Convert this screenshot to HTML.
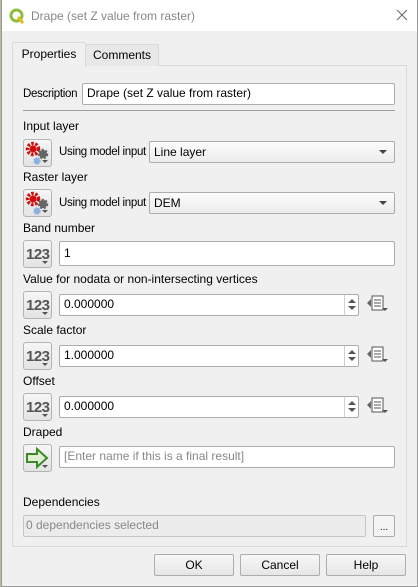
<!DOCTYPE html>
<html><head><meta charset="utf-8"><style>
*{box-sizing:border-box;margin:0;padding:0}
body{width:418px;height:587px;background:#f0f0f0;font-family:"Liberation Sans",sans-serif;font-size:12px;color:#000;position:relative;overflow:hidden}
.a{position:absolute}
.lbl{position:absolute;left:23px;line-height:14px}
.inp{position:absolute;background:#fff;border:1px solid #adadad;border-radius:2px;padding-left:4px;line-height:19px;height:22px}
.combo{position:absolute;background:linear-gradient(#fcfcfc,#ececec);border:1px solid #adadad;border-radius:2px;padding-left:4px;line-height:20px;height:22px}
.combo:after{content:"";position:absolute;right:7px;top:8px;border-left:4px solid transparent;border-right:4px solid transparent;border-top:4px solid #444}
.btn{position:absolute;left:23px;width:29px;height:28px;border:1px solid #b4b4b4;border-radius:3px;background:linear-gradient(#f6f6f6,#e3e3e3)}
.n{font-weight:bold;color:#555;font-size:15px;position:absolute;left:2px;top:5px;letter-spacing:-0.5px}
.tri{position:absolute;right:3px;bottom:3px;border-left:3px solid transparent;border-right:3px solid transparent;border-top:3px solid #555}
.spin{position:absolute;right:0;top:0;width:14px;height:20px;border-left:1px solid #d0d0d0}
.spin:before{content:"";position:absolute;left:3px;top:4px;border-left:4px solid transparent;border-right:4px solid transparent;border-bottom:4px solid #555}
.spin:after{content:"";position:absolute;left:3px;top:11px;border-left:4px solid transparent;border-right:4px solid transparent;border-top:4px solid #555}
.pb{position:absolute;height:22px;border:1px solid #adadad;border-radius:2px;background:linear-gradient(#f7f7f7,#e6e6e6);text-align:center;line-height:20px}
.umi{position:absolute;left:59px;line-height:14px;font-size:11.5px;letter-spacing:-0.3px}
</style></head><body>
<div class="a" style="left:0;top:0;width:2px;height:587px;background:#b9b9a0"></div>
<div class="a" style="left:1px;top:0;width:417px;height:587px;border:1px solid #9a9a9a;border-top:none;background:#f0f0f0"></div>
<div class="a" style="left:2px;top:0;width:415px;height:31px;background:#fff"></div>
<svg class="a" style="left:9px;top:8px" width="16" height="16" viewBox="0 0 16 16"><circle cx="7.5" cy="7.5" r="5.5" fill="none" stroke="#8cbc3c" stroke-width="3"/><path d="M9 9 L14 15" stroke="#e8b820" stroke-width="3"/></svg>
<div class="a" style="left:31px;top:9px;font-size:12px;color:#888;line-height:15px">Drape (set Z value from raster)</div>
<svg class="a" style="left:396px;top:9px" width="12" height="12"><path d="M1 1L11 11M11 1L1 11" stroke="#666" stroke-width="1"/></svg>

<div class="a" style="left:12px;top:65px;width:395px;height:482px;border:1px solid #d9d9d9;background:#f0f0f0"></div>
<div class="a" style="left:85px;top:44px;width:74px;height:22px;border:1px solid #d9d9d9;border-bottom:none;background:#e8e8e8;line-height:21px;text-align:center">Comments</div>
<div class="a" style="left:12px;top:42px;width:74px;height:25px;border:1px solid #d9d9d9;border-bottom:none;background:#f0f0f0;line-height:23px;text-align:center;border-radius:2px 2px 0 0">Properties</div>

<div class="lbl" style="top:87px;font-size:11.5px;letter-spacing:-0.3px">Description</div>
<div class="inp" style="left:82px;top:83px;width:313px">Drape (set Z value from raster)</div>
<div class="a" style="left:23px;top:110px;width:372px;height:1px;background:#a0a0a0"></div>

<div class="lbl" style="top:119px">Input layer</div>
<div class="btn" style="top:139px"><svg width="27" height="26"><circle cx="9" cy="9" r="5.5" fill="none" stroke="#d01010" stroke-width="3.5" stroke-dasharray="2.5 1.5"/><circle cx="9" cy="9" r="3.5" fill="#d01010"/><circle cx="19" cy="14" r="4" fill="#666" stroke="#666" stroke-dasharray="2 1.5" stroke-width="2.5"/><circle cx="13" cy="21" r="3" fill="#8ab0e0" stroke="#8ab0e0" stroke-width="1.5" stroke-dasharray="1.5 1"/></svg><div class="tri"></div></div>
<div class="umi" style="top:145px">Using model input</div>
<div class="combo" style="left:149px;top:141px;width:246px">Line layer</div>

<div class="lbl" style="top:170px">Raster layer</div>
<div class="btn" style="top:189px"><svg width="27" height="26"><circle cx="9" cy="9" r="5.5" fill="none" stroke="#d01010" stroke-width="3.5" stroke-dasharray="2.5 1.5"/><circle cx="9" cy="9" r="3.5" fill="#d01010"/><circle cx="19" cy="14" r="4" fill="#666" stroke="#666" stroke-dasharray="2 1.5" stroke-width="2.5"/><circle cx="13" cy="21" r="3" fill="#8ab0e0" stroke="#8ab0e0" stroke-width="1.5" stroke-dasharray="1.5 1"/></svg><div class="tri"></div></div>
<div class="umi" style="top:196px">Using model input</div>
<div class="combo" style="left:149px;top:192px;width:246px">DEM</div>

<div class="lbl" style="top:221px">Band number</div>
<div class="btn" style="top:240px"><span class="n">123</span><div class="tri"></div></div>
<div class="inp" style="left:59px;top:241px;width:336px;height:25px;line-height:23px">1</div>

<div class="lbl" style="top:272px">Value for nodata or non-intersecting vertices</div>
<div class="btn" style="top:291px"><span class="n">123</span><div class="tri"></div></div>
<div class="inp" style="left:59px;top:294px;width:300px">0.000000<div class="spin"></div></div>
<svg class="a" style="left:366px;top:294px" width="26" height="22"><path d="M1 9L5 5V13Z" fill="#666"/><rect x="6" y="2" width="11" height="14" fill="#fff" stroke="#555"/><path d="M8 6H15M8 9H15M8 12H15" stroke="#555"/><path d="M16 14H22L19 17Z" fill="#555"/></svg>

<div class="lbl" style="top:323px">Scale factor</div>
<div class="btn" style="top:342px"><span class="n">123</span><div class="tri"></div></div>
<div class="inp" style="left:59px;top:345px;width:300px">1.000000<div class="spin"></div></div>
<svg class="a" style="left:366px;top:345px" width="26" height="22"><path d="M1 9L5 5V13Z" fill="#666"/><rect x="6" y="2" width="11" height="14" fill="#fff" stroke="#555"/><path d="M8 6H15M8 9H15M8 12H15" stroke="#555"/><path d="M16 14H22L19 17Z" fill="#555"/></svg>

<div class="lbl" style="top:374px">Offset</div>
<div class="btn" style="top:393px"><span class="n">123</span><div class="tri"></div></div>
<div class="inp" style="left:59px;top:396px;width:300px">0.000000<div class="spin"></div></div>
<svg class="a" style="left:366px;top:396px" width="26" height="22"><path d="M1 9L5 5V13Z" fill="#666"/><rect x="6" y="2" width="11" height="14" fill="#fff" stroke="#555"/><path d="M8 6H15M8 9H15M8 12H15" stroke="#555"/><path d="M16 14H22L19 17Z" fill="#555"/></svg>

<div class="lbl" style="top:425px">Draped</div>
<div class="btn" style="top:444px"><svg width="27" height="26"><path d="M3 9H13V4L23 13L13 22V17H3Z" fill="#dff0d0" stroke="#3a8a2a" stroke-width="2"/></svg><div class="tri"></div></div>
<div class="inp" style="left:59px;top:446px;width:336px;color:#888">[Enter name if this is a final result]</div>

<div class="lbl" style="top:495px">Dependencies</div>
<div class="inp" style="left:23px;top:515px;width:343px;background:#ececec;border-color:#c5c5c5;color:#888;padding-left:2px">0 dependencies selected</div>
<div class="pb" style="left:373px;top:515px;width:22px;font-size:10px;line-height:24px;background:#f4f4f4">...</div>

<div class="pb" style="left:154px;top:554px;width:80px">OK</div>
<div class="pb" style="left:240px;top:554px;width:80px">Cancel</div>
<div class="pb" style="left:326px;top:554px;width:80px">Help</div>
</body></html>
